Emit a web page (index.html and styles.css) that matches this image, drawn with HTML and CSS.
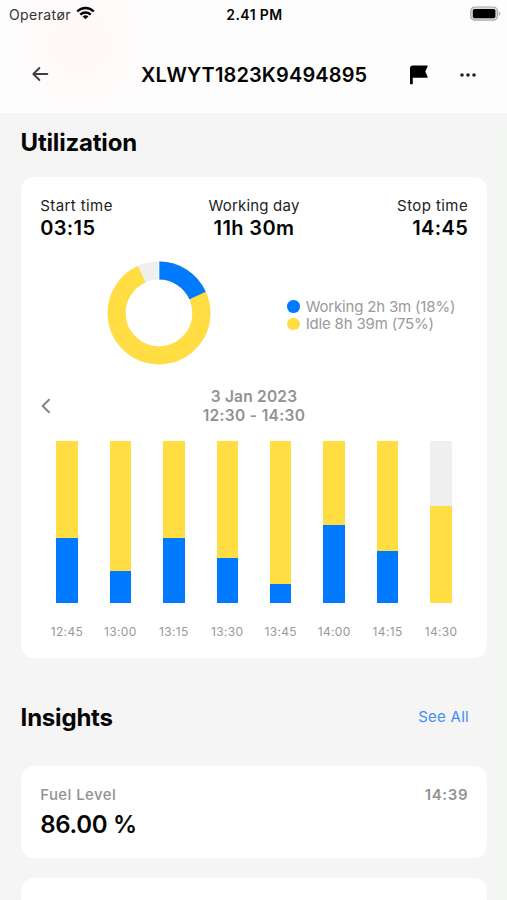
FILE: index.html
```html
<!DOCTYPE html>
<html lang="en">
<head>
<meta charset="utf-8">
<title>Machine utilization</title>
<meta name="viewport" content="width=device-width, initial-scale=1">
<link rel="stylesheet" href="styles.css">
</head>
<body>
<header class="top">
  <div class="status">
    <div class="carrier"><span class="carrier-name">Operatør</span>
      <svg class="wifi" width="19" height="14" viewBox="0 0 20 14" fill="none" stroke="#000" stroke-width="2.5"><path d="M1.3 5.4C6.3.5 13.7.5 18.7 5.4M4.5 8.7c3.2-3 7.8-3 11 0"/><path d="M10 13.6 6.9 10.7c1.9-1.6 4.3-1.6 6.2 0z" fill="#000" stroke="none"/></svg>
    </div>
    <div class="clock">2.41 PM</div>
    <svg class="battery" width="31" height="16" viewBox="0 0 31 16"><rect x=".8" y="1" width="26.6" height="13.2" rx="4" fill="#ddd" stroke="#aaa" stroke-width="1.2"/><rect x="2.8" y="3" width="22.6" height="9.2" rx="1.8"/><path d="M28.7 5.2c2 .9 2 3.9 0 4.8z" fill="#aaa"/></svg>
  </div>
  <nav class="nav">
    <svg class="back" width="18" height="16" viewBox="0 0 18 16" fill="none" stroke="#3e3e44" stroke-width="1.8" stroke-linecap="round" stroke-linejoin="round"><path d="M15.4 8H1.3M7.4 2 1.3 8l6.1 6"/></svg>
    <h1 class="title">XLWYT1823K9494895</h1>
    <svg class="flag" width="18" height="20" viewBox="0 0 18 20"><path d="M0 18.2V3C0 1.3 1.2.4 2.7.4h14c.9 0 1.2.7.8 1.4L15.3 6.6l2.2 4.9c.3.7 0 1.3-.8 1.3H2.8v5.4c0 1.6-2.8 1.6-2.8 0z"/></svg>
    <svg class="more" width="16" height="4" viewBox="0 0 16 4" fill="#222"><circle cx="2" cy="2" r="1.8"/><circle cx="8" cy="2" r="1.8"/><circle cx="14" cy="2" r="1.8"/></svg>
  </nav>
</header>
<main class="content">
  <h2 class="heading">Utilization</h2>
  <section class="card utilization">
    <div class="times">
      <div><div class="label start">Start time</div><div class="value">03:15</div></div>
      <div class="center"><div class="label work">Working day</div><div class="value duration">11h 30m</div></div>
      <div class="right"><div class="label stop">Stop time</div><div class="value">14:45</div></div>
    </div>
    <div class="summary">
      <svg class="donut" width="104" height="104" viewBox="-52 -52 104 104" fill="none" stroke-width="18">
        <g transform="rotate(-90)">
          <circle r="42.4" stroke="#efefef"/>
          <circle r="42.4" stroke="#ffdd43" pathLength="100" stroke-dasharray="93.3 100"/>
          <circle r="42.4" stroke="#007aff" pathLength="100" stroke-dasharray="18.2 100"/>
        </g>
        <path d="M-.1-52v19" stroke="#fff" stroke-width=".8"/>
      </svg>
      <ul class="legend">
        <li><i class="dot working"></i><span>Working 2h 3m (18%)</span></li>
        <li><i class="dot idle"></i><span>Idle 8h 39m (75%)</span></li>
      </ul>
    </div>
    <div class="period">
      <svg width="10" height="16" viewBox="0 0 10 16" fill="none" stroke="#858585" stroke-width="2" stroke-linecap="round" stroke-linejoin="round"><path d="M9 1.8 2.7 8 9 14.2"/></svg>
      <div class="range"><div class="date">3 Jan 2023</div><div class="hours">12:30 - 14:30</div></div>
    </div>
    <div class="chart">
      <div class="slot"><div class="bar"><i class="idle" style="height:60%"></i><i class="working" style="height:40%"></i></div><span>12:45</span></div>
      <div class="slot"><div class="bar"><i class="idle" style="height:80%"></i><i class="working" style="height:20%"></i></div><span>13:00</span></div>
      <div class="slot"><div class="bar"><i class="idle" style="height:60%"></i><i class="working" style="height:40%"></i></div><span>13:15</span></div>
      <div class="slot"><div class="bar"><i class="idle" style="height:72%"></i><i class="working" style="height:28%"></i></div><span>13:30</span></div>
      <div class="slot"><div class="bar"><i class="idle" style="height:88%"></i><i class="working" style="height:12%"></i></div><span>13:45</span></div>
      <div class="slot"><div class="bar"><i class="idle" style="height:52%"></i><i class="working" style="height:48%"></i></div><span>14:00</span></div>
      <div class="slot"><div class="bar"><i class="idle" style="height:68%"></i><i class="working" style="height:32%"></i></div><span>14:15</span></div>
      <div class="slot"><div class="bar"><i class="idle" style="height:60%"></i></div><span>14:30</span></div>
    </div>
  </section>
  <div class="insights-head"><h2 class="heading insights">Insights</h2><a class="see-all">See All</a></div>
  <section class="card insight">
    <div class="insight-top"><span class="metric">Fuel Level</span><span class="time">14:39</span></div>
    <div class="reading">86.00 %</div>
  </section>
  <section class="card next"></section>
</main>
</body>
</html>
```
FILE: styles.css
```css
* { box-sizing: border-box; }
body {
  margin: 0;
  height: 900px;
  overflow: hidden;
  background: linear-gradient(90deg, #f5f5f5 92%, #f4f6f4);
  color: #050505;
  font-family: Inter, "Liberation Sans", sans-serif;
}
h1, h2, ul { margin: 0; padding: 0; }
svg { display: block; flex: none; }
.top {
  height: 113px;
  background: radial-gradient(ellipse 90px 100px at 80px 42px, #fff7f6, rgba(255, 251, 250, .6) 60%, transparent), #fdfdfd;
}
.status {
  display: grid;
  grid-template-columns: 1fr auto 1fr;
  align-items: center;
  height: 28px;
  padding: 0 7px 0 9px;
}
.carrier { display: flex; align-items: center; gap: 5px; font-size: 14px; color: #333; }
.carrier-name { letter-spacing: .4px; }
.wifi { margin-top: -3px; }
.clock { font-size: 14px; font-weight: 600; letter-spacing: .4px; }
.battery { justify-self: end; margin: -1px -1px 0 0; }
.nav { display: flex; align-items: center; height: 93px; padding: 0 31px; }
.back { margin: -2px 0 0 1px; }
.title { margin-left: 91px; width: 227px; font-size: 20px; line-height: 26px; font-weight: 600; letter-spacing: .12px; white-space: nowrap; }
.flag { margin: 0 0 0 42px; }
.more { margin: 0 0 0 32px; }
.content { padding: 0 19.6px 0 20.6px; }
.heading { height: 63.7px; padding-top: 15px; font-size: 24px; line-height: 30px; font-weight: 700; letter-spacing: -.2px; }
.card { background: #fff; border-radius: 13px; }
.utilization { height: 481px; padding: 19.3px 19.6px 0; }
.times { display: grid; grid-template-columns: 1fr auto 1fr; height: 65px; }
.center { text-align: center; }
.right { text-align: right; margin-right: -.3px; }
.label { font-size: 15px; line-height: 20px; letter-spacing: .42px; color: #222; }
.work { letter-spacing: .2px; }
.value { font-size: 20px; line-height: 25px; font-weight: 600; letter-spacing: .38px; }
.summary { display: flex; align-items: center; height: 104px; padding-left: 67px; }
.legend { list-style: none; margin: 5px 0 0 76px; color: #9a9a9a; font-size: 15px; line-height: 17.5px; letter-spacing: -.18px; }
.legend li { display: flex; align-items: center; gap: 6px; white-space: nowrap; }
.dot { width: 12.5px; height: 12.5px; border-radius: 50%; }
.working { background: #007aff; }
.idle { background: #ffdd43; }
.period { display: grid; grid-template-columns: 10px 1fr 10px; align-items: center; height: 76px; padding-top: 6px; }
.period svg { margin-top: 0; }
.range { text-align: center; color: #929292; font-size: 15.5px; line-height: 19px; font-weight: 600; letter-spacing: .35px; }
.date { letter-spacing: .22px; }
.chart { display: grid; grid-template-columns: repeat(8, 1fr); }
.slot { display: flex; flex-direction: column; align-items: center; }
.slot span { margin-top: 20px; font-size: 12px; line-height: 17px; letter-spacing: .36px; color: #999; }
.bar { display: flex; flex-direction: column; justify-content: flex-end; width: 21.5px; height: 162px; background: #efefef; }
.insights-head { display: flex; justify-content: space-between; height: 108.5px; padding: 45px 18.5px 0 0; }
.insights { height: auto; padding: 0; }
.see-all { margin-top: -.5px; font-size: 15px; line-height: 30px; letter-spacing: .25px; color: #438df7; }
.insight { height: 92px; padding: 19px 19.6px 0; }
.insight-top { display: flex; justify-content: space-between; font-size: 15px; line-height: 20px; color: #929292; font-weight: 500; letter-spacing: .4px; }
.time { font-weight: 600; letter-spacing: .7px; margin-right: -.6px; }
.reading { margin-top: 5px; font-size: 24px; line-height: 30px; font-weight: 600; letter-spacing: -.3px; }
.next { height: 22px; margin-top: 20px; border-radius: 13px 13px 0 0; }
```
